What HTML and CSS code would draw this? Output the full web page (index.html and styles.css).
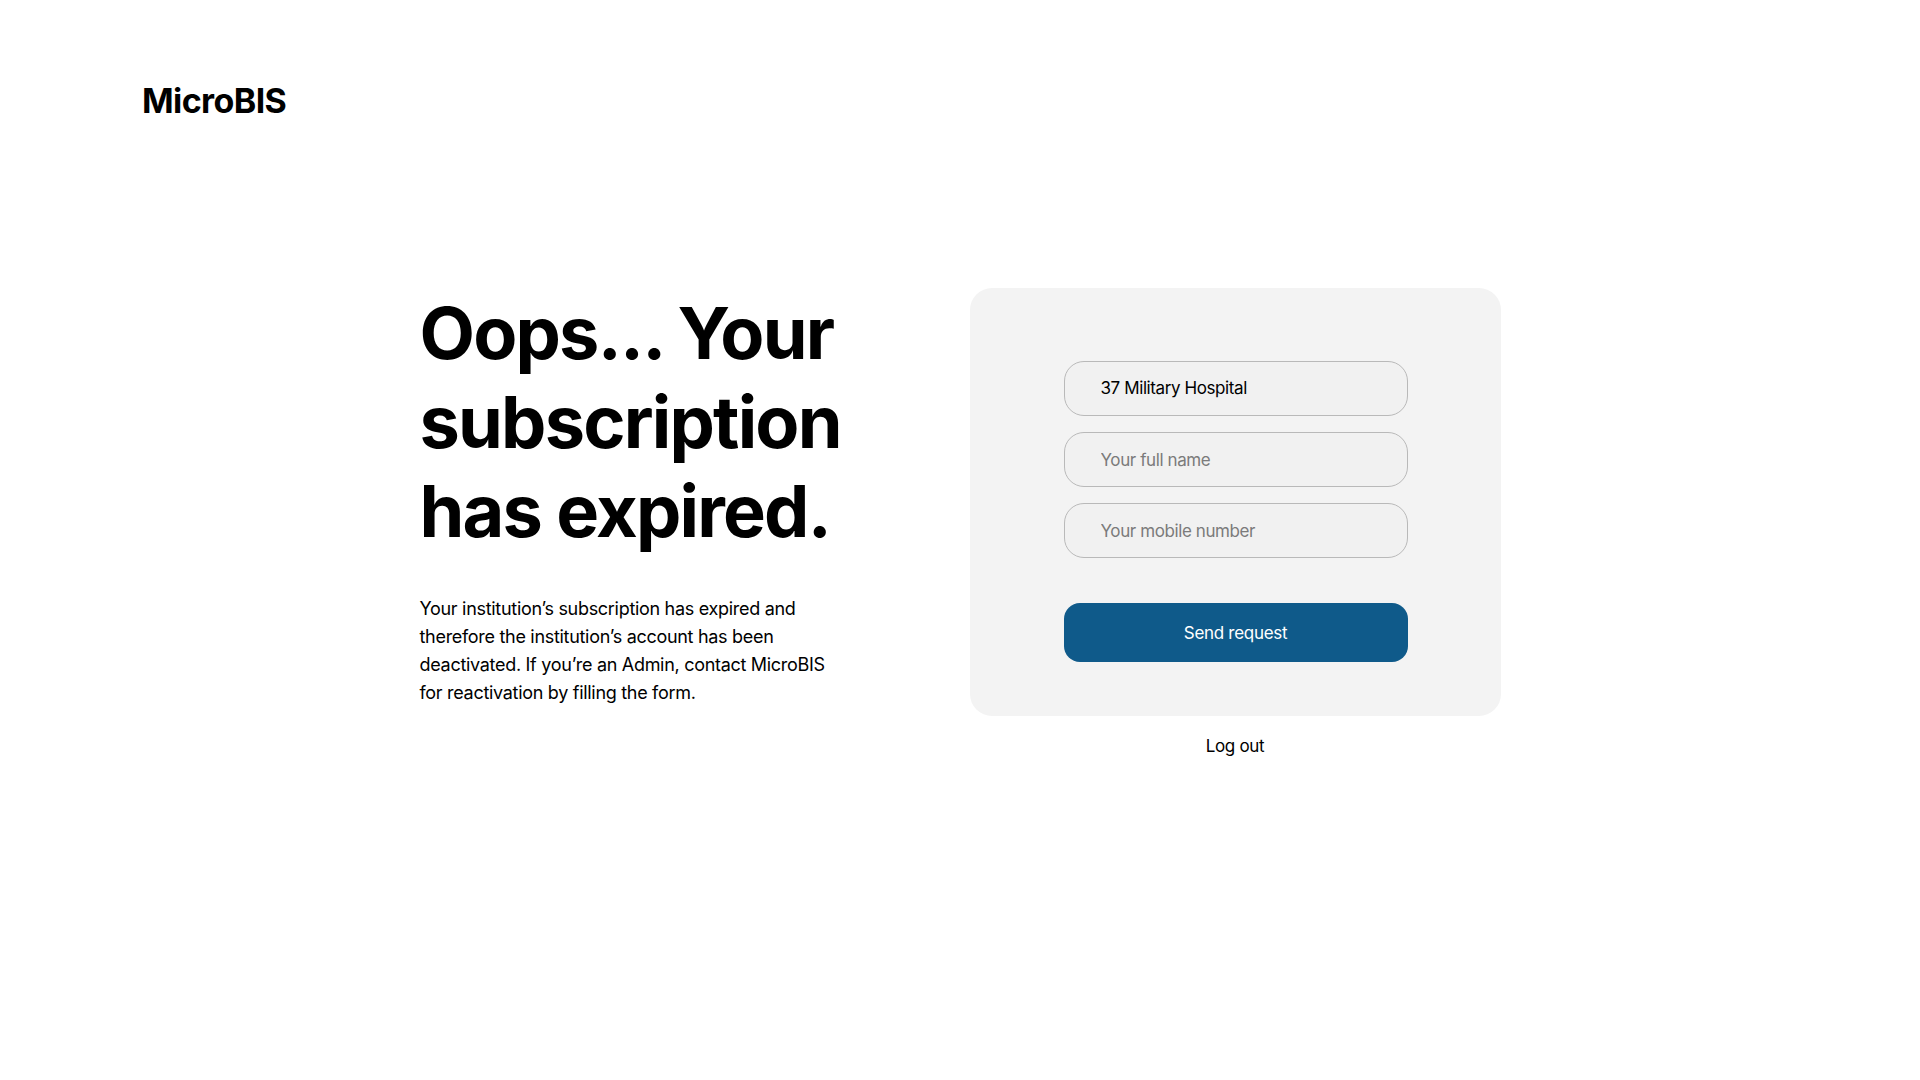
FILE: index.html
```html
<!DOCTYPE html>
<html lang="en">
<head>
<meta charset="utf-8">
<title>MicroBIS – Subscription expired</title>
<link rel="stylesheet" href="styles.css">
</head>
<body>
<header class="topbar">
  <div class="logo">MicroBIS</div>
</header>
<main class="main">
  <section class="intro">
    <h1 class="title">Oops... Your subscription has expired.</h1>
    <p class="desc">Your institution’s subscription has expired and therefore the institution’s account has been deactivated. If you’re an Admin, contact MicroBIS for reactivation by filling the form.</p>
  </section>
  <section class="side">
    <form class="card">
      <div class="field filled">37 Military Hospital</div>
      <input class="field" type="text" placeholder="Your full name">
      <input class="field" type="text" placeholder="Your mobile number">
      <button class="send" type="button">Send request</button>
    </form>
    <a class="logout" href="#">Log out</a>
  </section>
</main>
</body>
</html>
```
FILE: styles.css
```css
* { box-sizing: border-box; }
html, body { margin: 0; padding: 0; background: #ffffff; }
body {
  font-family: Inter, "Noto Sans", "Liberation Sans", sans-serif;
  color: #000;
  width: 1920px;
  height: 1080px;
  overflow: hidden;
}
.topbar {
  padding: 81px 0 0 142px;
}
.logo {
  font-size: 34px;
  font-weight: 700;
  letter-spacing: -0.6px;
  line-height: 40px;
}
.main {
  display: flex;
  justify-content: center;
  align-items: flex-start;
  gap: 100px;
  margin-top: 167px;
}
.intro {
  width: 450px;
  padding-top: 0;
}
.title {
  margin: 0;
  font-size: 72px;
  font-weight: 700;
  line-height: 89px;
  letter-spacing: -1.8px;
  width: 440px;
}
.desc {
  margin: 40px 0 0 0;
  font-size: 18px;
  line-height: 28px;
  letter-spacing: -0.3px;
  width: 420px;
}
.side {
  display: flex;
  flex-direction: column;
  align-items: center;
}
.card {
  width: 531px;
  background: #f3f3f3;
  border-radius: 22px;
  padding: 73px 93px 54px 94px;
  display: flex;
  flex-direction: column;
  gap: 16px;
}
.field {
  display: block;
  width: 344px;
  height: 55px;
  border: 1px solid #b9b9b9;
  border-radius: 20px;
  background: #f1f1f1;
  padding: 0 0 0 36px;
  font-family: inherit;
  font-size: 17px;
  letter-spacing: -0.4px;
  color: #000;
  line-height: 53px;
  outline: none;
}
.field::placeholder { color: #7b7b7b; }
.send {
  margin-top: 29px;
  width: 344px;
  height: 59px;
  border: none;
  border-radius: 16px;
  background: #0f5a8a;
  color: #fff;
  font-family: inherit;
  font-size: 17px;
  letter-spacing: -0.3px;
  cursor: pointer;
}
.logout {
  margin-top: 19px;
  font-size: 17px;
  letter-spacing: -0.3px;
  color: #000;
  text-decoration: none;
  line-height: 22px;
}
```
